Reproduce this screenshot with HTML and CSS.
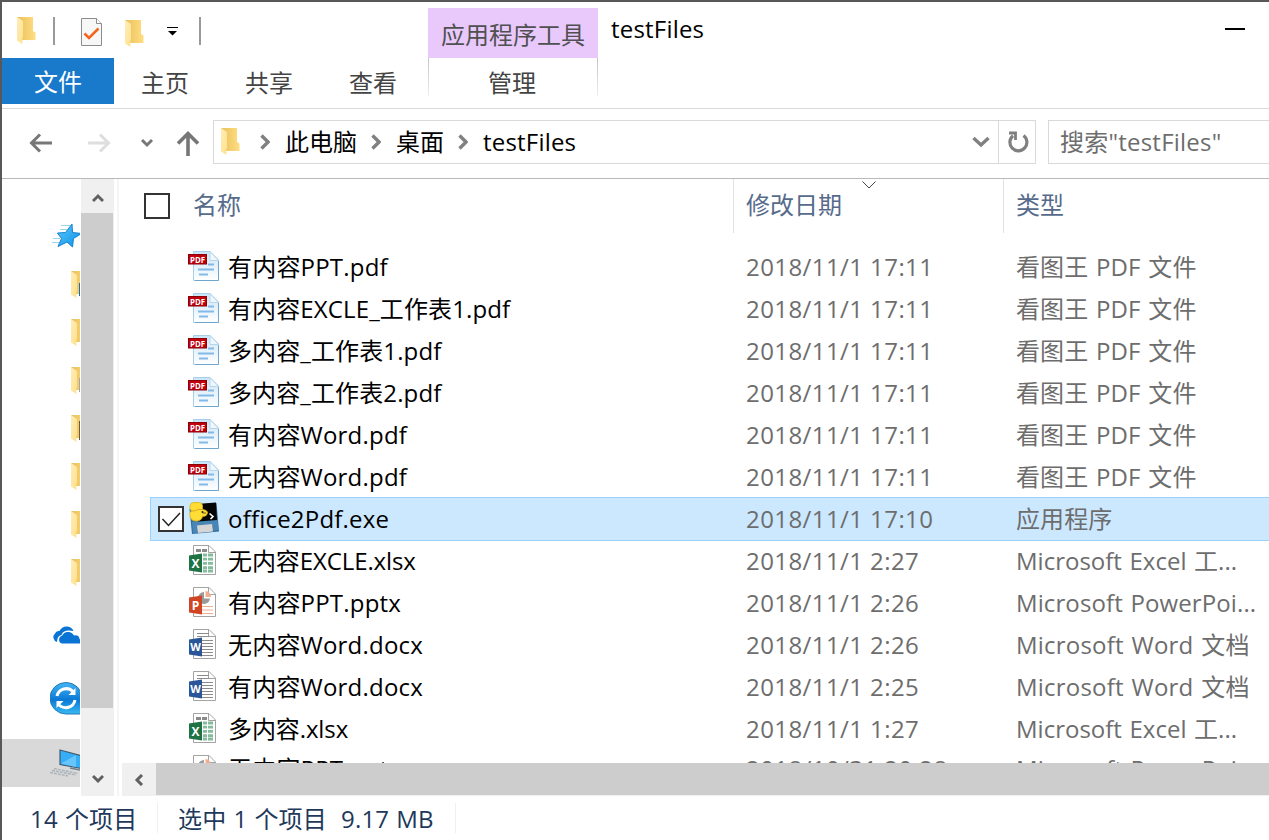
FILE: index.html
```html
<!DOCTYPE html>
<html lang="zh-CN">
<head>
<meta charset="utf-8">
<title>testFiles</title>
<link rel="stylesheet" href="styles.css">
</head>
<body>
<svg class="defs" aria-hidden="true">
  <defs>
    <linearGradient id="gBack" x1="0" x2="1" y1="0" y2="0"><stop offset="0" stop-color="#e9bf5c"/><stop offset="1" stop-color="#ffde82"/></linearGradient>
    <linearGradient id="gFlap" x1="0" x2="1" y1="0" y2="1"><stop offset="0" stop-color="#ffeeb8"/><stop offset="1" stop-color="#ffe08c"/></linearGradient>
    <linearGradient id="gPage" x1="0" x2="0" y1="0" y2="1"><stop offset="0" stop-color="#c9e5f8"/><stop offset="1" stop-color="#ffffff"/></linearGradient>
    <linearGradient id="gStar" x1="0" x2="1" y1="0" y2="1"><stop offset="0" stop-color="#5cc8fb"/><stop offset="1" stop-color="#0c8fe8"/></linearGradient>
    <linearGradient id="gSync" x1="0" x2="0" y1="0" y2="1"><stop offset="0" stop-color="#45b5f5"/><stop offset=".55" stop-color="#0a79d6"/><stop offset="1" stop-color="#38b9f2"/></linearGradient>
    <symbol id="folder" viewBox="0 0 19 28">
      <path d="M0 0H16V14L18.500 15.500V23H5Z" fill="url(#gBack)"/>
      <path d="M0 0L6 4V20L5.300 21V27L0 23.500Z" fill="url(#gFlap)"/>
    </symbol>
    <symbol id="pdf" viewBox="0 0 32 32">
      <path d="M5.500 1.500H22L30.500 10V30.500H5.500Z" fill="url(#gPage)" stroke="#a9cfe6"/>
      <path d="M7 30.500H30.500V11" fill="none" stroke="#6fa6cd"/>
      <path d="M22 1.500V10.500H30.500Z" fill="#eef7fd" stroke="#b9d6e8"/>
      <path d="M20 14.500H26M10 19.500H26M11 24.500H20" stroke="#84b9e6" stroke-width="2"/>
      <rect x="0.500" y="4.500" width="18" height="9.500" fill="#c2000b" stroke="#8e0008"/>
      <text x="2" y="12.500" class="pdf-label" textLength="15" lengthAdjust="spacingAndGlyphs">PDF</text>
    </symbol>
    <symbol id="doc" viewBox="0 0 28 32">
      <path d="M5.500 1.500H21L27.500 8V30.500H5.500Z" fill="#fff" stroke="#a3a3a3"/>
      <path d="M20.500 1.500V8.500H27.500" fill="none" stroke="#a3a3a3"/>
    </symbol>
    <symbol id="xlsx" viewBox="0 0 28 32">
      <use href="#doc"/>
      <path d="M8 6.500H13M14 6.500H19" stroke="#8a8a8a" stroke-width="3"/>
      <path d="M15 11h4M20 11h5M15 15.200h4M20 15.200h5M15 19.400h4M20 19.400h5M15 23.600h4M20 23.600h5M15 27h4M20 27h5" stroke="#83bd9d" stroke-width="2.800"/>
      <path d="M1 11.500L14 9.500V28.500L1 26.500Z" fill="#1f7244"/>
      <text x="7.500" y="23.500" class="office-label">X</text>
    </symbol>
    <symbol id="pptx" viewBox="0 0 28 32">
      <use href="#doc"/>
      <path d="M16 7V12.500H22A6 6 0 1 1 16 6Z" fill="#9a9a9a"/>
      <path d="M17.500 5A6 6 0 0 1 23 11H17.500Z" fill="#f3ad8e"/>
      <path d="M14 20.500H25M14 24H25M14 27.500H25" stroke="#f3ad8e"/>
      <path d="M1 11.500L14 9.500V28.500L1 26.500Z" fill="#d04525"/>
      <text x="7.500" y="23.500" class="office-label">P</text>
    </symbol>
    <symbol id="docx" viewBox="0 0 28 32">
      <use href="#doc"/>
      <path d="M9 5.500H21M9 8.500H21M14 12.500H25M14 15.500H25M14 18.500H25M14 21.500H25M14 24.500H25M14 27.500H25" stroke="#8b8b8b"/>
      <path d="M1 11.500L14 9.500V28.500L1 26.500Z" fill="#2a5699"/>
      <text x="7.500" y="23" class="office-label office-w">W</text>
    </symbol>
    <symbol id="exe" viewBox="0 0 32 34">
      <path d="M1.500 8L4 33L31 30.500L28.500 2L8 3.500Z" fill="#356f9f"/>
      <path d="M4 21L29.500 19L30.500 29L5 32Z" fill="#4a86b5"/>
      <path d="M9 3L28 1.500L29 19L10 20.500Z" fill="#050505"/>
      <path d="M9 24.500L24 23L25 30.500L10 32Z" fill="#d5d5d5"/>
      <path d="M21.500 12.500L25 15.500L22.500 18" fill="none" stroke="#fff" stroke-width="1.600"/>
      <path d="M2 5Q2 1.500 6 1.500H11Q14 1.500 14.500 4.500V8.500Q19.500 9 19.500 12Q19 15.500 14.500 15.500Q13.500 20 8 20Q2.500 20 1.800 14Q1.500 11 3.500 10Q1.500 8 2 5Z" fill="#ffdd35" stroke="#dcb21c" stroke-width=".8"/>
      <path d="M3.500 10Q7 10.500 10 8.500H14.500" fill="none" stroke="#d6ab18"/>
      <path d="M14.500 12H18" stroke="#6b540c"/>
      <circle cx="14.500" cy="11" r="1" fill="#222"/>
    </symbol>
  </defs>
</svg>

<div class="window">
  <header class="titlebar">
    <div class="quick">
      <svg class="q-folder" width="19" height="28"><use href="#folder"/></svg>
      <i class="q-sep first"></i>
      <svg class="q-prop" width="22" height="29" viewBox="0 0 22 29"><path d="M.5.500H15.500L20.500 5.500V27.500H.5Z" fill="#f7f7f8" stroke="#8c8c8c"/><path d="M15.500.500V5.500H20.500" fill="#fff" stroke="#8c8c8c"/><path d="M3.500 15.500L8 20L17.500 10.500" fill="none" stroke="#f4641c" stroke-width="2.600"/></svg>
      <svg class="q-folder second" width="19" height="28"><use href="#folder"/></svg>
      <svg class="q-more" width="11" height="9" viewBox="0 0 11 9"><path d="M0 .500H11" stroke="#000"/><path d="M1 4H10L5.500 8.500Z"/></svg>
      <i class="q-sep"></i>
    </div>
    <div class="context-title">应用程序工具</div>
    <h1 class="title">testFiles</h1>
    <i class="minimize"></i>
  </header>

  <nav class="tabs">
    <a class="tab file">文件</a>
    <a class="tab">主页</a>
    <a class="tab">共享</a>
    <a class="tab">查看</a>
    <a class="tab context">管理</a>
  </nav>

  <div class="navbar">
    <svg class="arrows" width="211" height="69" viewBox="2 109 211 69" fill="none" stroke="#777" stroke-width="3">
      <path d="M52 143H32M40 134.500L31.500 143L40 151.500"/>
      <path d="M88 143H108M100 134.500L108.500 143L100 151.500" stroke="#dedede"/>
      <path d="M142 140L147 145L152 140"/>
      <path d="M188 156V134M178 143.500L188 133.500L198 143.500" stroke-width="3.600"/>
    </svg>
    <div class="address">
      <svg class="a-folder" width="19" height="28"><use href="#folder"/></svg>
      <svg class="chev" width="10" height="16" viewBox="0 0 10 16"><path d="M1.500 1.500L8 8L1.500 14.500"/></svg>
      <span class="crumb pc">此电脑</span>
      <svg class="chev" width="10" height="16" viewBox="0 0 10 16"><path d="M1.500 1.500L8 8L1.500 14.500"/></svg>
      <span class="crumb desk">桌面</span>
      <svg class="chev" width="10" height="16" viewBox="0 0 10 16"><path d="M1.500 1.500L8 8L1.500 14.500"/></svg>
      <span class="crumb last">testFiles</span>
      <svg class="drop" width="18" height="12" viewBox="0 0 18 12"><path d="M1.500 2L9 9L16.500 2" fill="none" stroke="#808080" stroke-width="3.400"/></svg>
      <div class="refresh"><svg width="22" height="24" viewBox="0 0 22 24" fill="none" stroke="#808080"><path d="M16.500 5.500A8.500 8.500 0 1 1 6 5.700" stroke-width="3.200"/><path d="M2 3H8.500V10" stroke-width="2.800"/></svg></div>
    </div>
    <div class="search">搜索"testFiles"</div>
  </div>

  <main class="main">
    <aside class="tree">
      <div class="node star"><svg width="30" height="26" viewBox="0 0 30 26"><path d="M20 1L20.500 9.500L29.500 10.500L21.500 15.500L20.500 24L15 19L6 23.500L9.500 15.500L5.500 10L13.500 9.500Z" fill="url(#gStar)" stroke="#1284cf"/><path d="M9 2.500H18M8 6.500H15M1 15.500H8M0 19.500H7" stroke="#9bd3f3"/></svg></div>
      <div class="node f"><svg width="19" height="28"><use href="#folder"/><path d="M8.500 12V25" stroke="#1b6eaf"/></svg></div>
      <div class="node f"><svg width="19" height="28"><use href="#folder"/></svg></div>
      <div class="node f"><svg width="19" height="28"><use href="#folder"/><path d="M8.500 11V25" stroke="#a5a5a5"/></svg></div>
      <div class="node f"><svg width="19" height="28"><use href="#folder"/><path d="M8.500 6V25" stroke="#705b38"/></svg></div>
      <div class="node f"><svg width="19" height="28"><use href="#folder"/></svg></div>
      <div class="node f"><svg width="19" height="28"><use href="#folder"/></svg></div>
      <div class="node f"><svg width="19" height="28"><use href="#folder"/></svg></div>
      <div class="node cloud"><svg width="32" height="18" viewBox="0 0 32 18"><path d="M5 16A5 5 0 0 1 3 7.500Q4 4.500 7.500 5Q10 0 15.500 .500Q20 1 21.500 5Q11 3 9.500 9Q5 10 5 16Z" fill="#0a74d4"/><path d="M10 17.500A4 4 0 0 1 10 9.800Q12 5.500 16.500 6Q20 6 22 9.500Q27 8.500 27.500 13Q31 15 29 17.500Z" fill="#0a74d4"/></svg></div>
      <div class="node sync"><svg width="36" height="34" viewBox="0 0 36 34"><path d="M0 16A16 15.500 0 0 1 32 16V32H16A16 16 0 0 1 0 16Z" fill="url(#gSync)" stroke="#2379b5"/><g fill="none" stroke="#fff" stroke-width="3"><path d="M7 14A9.500 9.500 0 0 1 23 9.500M25 18A9.500 9.500 0 0 1 9 23"/></g><path d="M25.500 6V13H18.500ZM6.500 26V19H13.500Z" fill="#fff"/></svg></div>
      <div class="node pc"><svg width="34" height="28" viewBox="0 0 34 28"><path d="M10 1L34 7.500V20L10 15.500Z" fill="#36adf7" stroke="#3f5c70" stroke-width="1.200"/><path d="M11 14.500L26 6V18Z" fill="#67c5fb"/><path d="M4 19.500L28 24.500M2 21.500L26 26M0 23.500L18 27" stroke="#a9b2b9" stroke-width="1.400" stroke-dasharray="3 1"/><path d="M20 19L30 21" stroke="#71808a" stroke-width="1.600"/></svg></div>
    </aside>

    <div class="vscroll">
      <div class="btn up"><svg width="12" height="10" viewBox="0 0 12 10"><path d="M1 8L6 3L11 8"/></svg></div>
      <div class="vthumb"></div>
      <div class="btn down"><svg width="12" height="10" viewBox="0 0 12 10"><path d="M1 2L6 7L11 2"/></svg></div>
    </div>
    <div class="splitter"></div>

    <section class="list">
      <div class="head">
        <span class="box"></span>
        <span class="h-name">名称</span>
        <span class="h-date">修改日期<svg class="sort" width="14" height="8" viewBox="0 0 14 8"><path d="M.5.500L7 7L13.500.500" fill="none" stroke="#444"/></svg></span>
        <span class="h-type">类型</span>
      </div>
      <div class="rows">
        <div class="row"><svg class="ico" width="32" height="32"><use href="#pdf"/></svg><span class="name">有内容PPT.pdf</span><span class="date">2018/11/1 17:11</span><span class="type">看图王 PDF 文件</span></div>
        <div class="row"><svg class="ico" width="32" height="32"><use href="#pdf"/></svg><span class="name mid">有内容EXCLE_工作表1.pdf</span><span class="date">2018/11/1 17:11</span><span class="type">看图王 PDF 文件</span></div>
        <div class="row"><svg class="ico" width="32" height="32"><use href="#pdf"/></svg><span class="name mid">多内容_工作表1.pdf</span><span class="date">2018/11/1 17:11</span><span class="type">看图王 PDF 文件</span></div>
        <div class="row"><svg class="ico" width="32" height="32"><use href="#pdf"/></svg><span class="name mid">多内容_工作表2.pdf</span><span class="date">2018/11/1 17:11</span><span class="type">看图王 PDF 文件</span></div>
        <div class="row"><svg class="ico" width="32" height="32"><use href="#pdf"/></svg><span class="name">有内容Word.pdf</span><span class="date">2018/11/1 17:11</span><span class="type">看图王 PDF 文件</span></div>
        <div class="row"><svg class="ico" width="32" height="32"><use href="#pdf"/></svg><span class="name">无内容Word.pdf</span><span class="date">2018/11/1 17:11</span><span class="type">看图王 PDF 文件</span></div>
        <div class="row selected"><span class="box"><svg width="22" height="22" viewBox="0 0 22 22"><path d="M2.500 11L8.500 17.500L20 5" fill="none" stroke="#222" stroke-width="1.500"/></svg></span><svg class="ico" width="32" height="34"><use href="#exe"/></svg><span class="name">office2Pdf.exe</span><span class="date">2018/11/1 17:10</span><span class="type">应用程序</span></div>
        <div class="row"><svg class="ico" width="28" height="32"><use href="#xlsx"/></svg><span class="name tight">无内容EXCLE.xlsx</span><span class="date">2018/11/1 2:27</span><span class="type excel">Microsoft Excel 工...</span></div>
        <div class="row"><svg class="ico" width="28" height="32"><use href="#pptx"/></svg><span class="name">有内容PPT.pptx</span><span class="date">2018/11/1 2:26</span><span class="type">Microsoft PowerPoi...</span></div>
        <div class="row"><svg class="ico" width="28" height="32"><use href="#docx"/></svg><span class="name">无内容Word.docx</span><span class="date">2018/11/1 2:26</span><span class="type word">Microsoft Word 文档</span></div>
        <div class="row"><svg class="ico" width="28" height="32"><use href="#docx"/></svg><span class="name">有内容Word.docx</span><span class="date">2018/11/1 2:25</span><span class="type word">Microsoft Word 文档</span></div>
        <div class="row"><svg class="ico" width="28" height="32"><use href="#xlsx"/></svg><span class="name tight">多内容.xlsx</span><span class="date">2018/11/1 1:27</span><span class="type excel">Microsoft Excel 工...</span></div>
        <div class="row last-row"><svg class="ico" width="28" height="32"><use href="#pptx"/></svg><span class="name">无内容PPT.pptx</span><span class="date">2018/10/31 20:28</span><span class="type">Microsoft PowerPoi...</span></div>
      </div>
      <div class="hscroll"><div class="left"><svg width="10" height="12" viewBox="0 0 10 12"><path d="M8 1L3 6L8 11"/></svg></div><div class="hthumb"></div></div>
    </section>
  </main>

  <footer class="status">
    <span class="count">14 个项目</span>
    <span class="sel">选中 1 个项目</span>
    <span class="size">9.17 MB</span>
  </footer>
</div>
</body>
</html>
```
FILE: styles.css
```css
* { box-sizing: border-box; }
body {
  margin: 0;
  background: #fff;
  font: 24px/32px "Open Sans", "Noto Sans CJK SC", sans-serif;
  color: #000;
  overflow: hidden;
}
.defs { position: absolute; width: 0; height: 0; }
svg { display: block; flex: none; }
.window {
  width: 1269px;
  height: 840px;
  border-top: 2px solid #595757;
  border-left: 2px solid #595757;
  display: flex;
  flex-direction: column;
  overflow: hidden;
  white-space: nowrap;
}

/* title bar */
.titlebar { height: 56px; flex: none; display: flex; align-items: flex-start; }
.quick { width: 426px; display: flex; align-items: flex-start; padding-left: 15px; }
.q-folder { margin-top: 15px; }
.q-folder.second { margin: 18px 0 0 22px; }
.q-sep { width: 2px; height: 28px; margin: 15px 0 0 21px; background: #9a9a9a; }
.q-sep.first { margin-left: 17px; }
.q-prop { margin: 16px 0 0 26px; }
.q-more { margin: 25px 0 0 23px; }
.context-title {
  width: 170px; height: 50px; margin-top: 6px; padding-top: 11px;
  background: #e9c9fc; color: #505050; text-align: center;
}
.title { margin: 11px 0 0 13px; font-size: 24px; font-weight: 400; letter-spacing: .2px; }
.minimize { width: 20px; height: 2px; margin: 26px 24px 0 auto; background: #000; }

/* ribbon tabs */
.tabs { height: 51px; flex: none; display: flex; border-bottom: 1px solid #dadada; color: #444; }
.tab { width: 104px; height: 46px; padding: 9px 2px 0 0; text-align: center; }
.file { width: 112px; padding: 8px 0 0; background: #1979ca; color: #fff; }
.context {
  width: 170px; height: 38px; margin-left: 2px;
  border: 1px solid; border-width: 0 1px;
  border-image: linear-gradient(#c2c2c2, #f0f0f0) 1;
}

/* navigation bar */
.navbar { height: 70px; flex: none; display: flex; border-bottom: 1px solid #b9b9b9; }
.arrows { margin-right: -2px; }
.address {
  width: 823px; height: 44px; margin: 11px 0 0 2px;
  border: 1px solid #d9d9d9; display: flex; align-items: center;
}
.a-folder { margin-left: 7px; }
.chev { fill: none; stroke: #808080; stroke-width: 3.4; }
.a-folder + .chev { margin: 0 15px 0 20px; }
.pc + .chev { margin: 0 15px 0 14px; }
.desk + .chev { margin: 0 15px 0 14px; }
.last { letter-spacing: .2px; }
.drop { margin-left: auto; margin-right: 8px; }
.refresh { width: 37px; height: 42px; border-left: 1px solid #d9d9d9; padding: 9px 0 0 8px; }
.search {
  flex: 1; height: 44px; margin: 11px 0 0 12px; padding: 5px 0 0 11px;
  border: 1px solid #d9d9d9; border-right: 0; color: #6d6d6d; letter-spacing: .22px;
}

/* body */
.main { height: 617px; flex: none; display: flex; }
.tree { width: 78px; padding-top: 34px; overflow: hidden; }
.node { height: 48px; display: flex; align-items: center; }
.node.star { padding: 0 0 2px 50px; }
.node.f { padding-left: 69px; }
.node.cloud { margin-top: 14px; padding-left: 50px; }
.node.sync { margin-top: 16px; padding-left: 48px; }
.node.pc { margin-top: 16px; padding-left: 48px; background: #d9d9d9; }
.vscroll { width: 33px; margin-left: 1px; background: #f0f0f0; display: flex; flex-direction: column; }
.btn { height: 34px; display: flex; align-items: center; justify-content: center; }
.up { padding-top: 3px; }
.btn path, .left path { fill: none; stroke: #606060; stroke-width: 3; }
.vthumb { width: 32px; height: 495px; background: #cdcdcd; }
.down { margin-top: auto; }
.splitter { width: 2px; margin: 0 3px; background: #f5f5f5; }
.list { flex: 1; min-width: 0; display: flex; flex-direction: column; }
.head { height: 67px; flex: none; display: flex; color: #566b8c; }
.box { width: 26px; height: 26px; flex: none; border: 2px solid #333; background: #fff; }
.head .box { margin: 14px 0 0 22px; }
.h-name { width: 563px; padding: 10px 0 0 23px; }
.h-date { width: 270px; height: 54px; padding: 10px 0 0 12px; border-left: 1px solid #e2e2e2; position: relative; }
.sort { position: absolute; left: 128px; top: 2px; }
.h-type { height: 54px; padding: 10px 0 0 12px; border-left: 1px solid #e2e2e2; }
.rows { height: 517px; flex: none; overflow: hidden; }
.row { height: 42px; display: grid; grid-template-columns: 40px 518px 270px 1fr; padding-left: 66px; align-items: center; }
.ico { margin-top: -2px; }
.row .name { letter-spacing: .2px; }
.row .mid { letter-spacing: .12px; }
.row .tight { letter-spacing: -.1px; }
.row .date, .row .type { color: #6d6d6d; }
.row .date { letter-spacing: .42px; }
.row .type { letter-spacing: .1px; word-spacing: 1.4px; }
.row .excel { letter-spacing: 0; }
.row .word { letter-spacing: .2px; }
.last-row span { padding-bottom: 4px; }
.row.selected {
  height: 44px; margin: -1px -2px -1px 28px; padding-left: 7px;
  grid-template-columns: 30px 40px 518px 270px 1fr;
  background: #cce8ff; border: 1px solid #99d1ff;
}
.row .box { padding: 0; }
.pdf-label { font: 700 9px "Open Sans", sans-serif; fill: #fff; }
.office-label { font: 700 12px "Open Sans", sans-serif; fill: #fff; text-anchor: middle; }
.office-w { font-size: 11px; }
.hscroll { height: 33px; background: #f0f0f0; display: flex; }
.left { width: 34px; display: flex; align-items: center; justify-content: center; }
.hthumb { flex: 1; height: 32px; background: #cdcdcd; }

/* status bar */
.status { flex: 1; display: flex; padding-top: 7px; color: #1e395b; letter-spacing: .2px; word-spacing: .6px; }
.count { width: 156px; padding-left: 28px; border-right: 1px solid #f0f0f0; }
.sel { padding-left: 20px; }
.size { padding: 0 21px 0 14px; border-right: 1px solid #f0f0f0; }
.status span { height: 30px; }
```
